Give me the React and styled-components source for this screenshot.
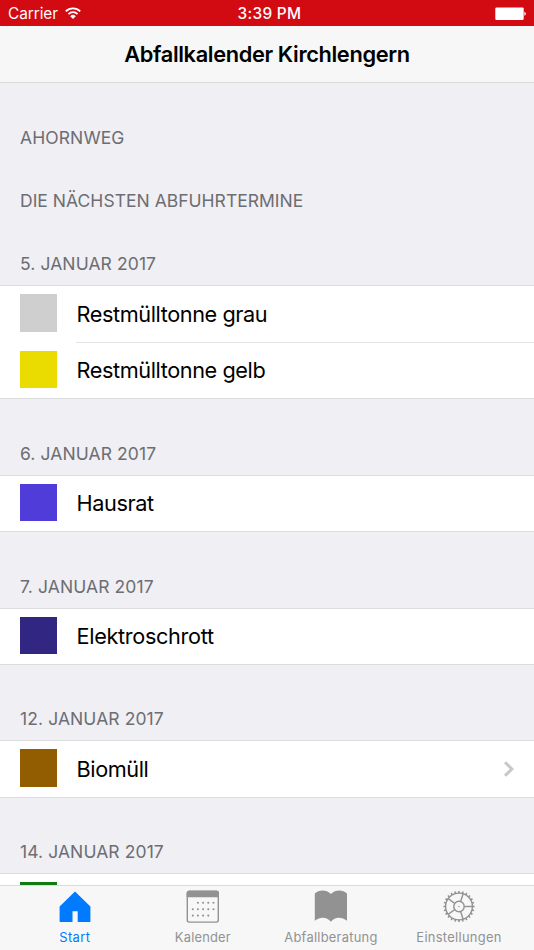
import React from 'react';
import styled, { createGlobalStyle } from 'styled-components';

const GlobalStyle = createGlobalStyle`
  * { box-sizing: border-box; }
  html, body { margin: 0; padding: 0; }
  body {
    font-family: Inter, "Liberation Sans", sans-serif;
    background: #efeff4;
    overflow: hidden;
  }
`;

const Screen = styled.div`
  display: flex;
  flex-direction: column;
  width: 534px;
  height: 950px;
  background: #efeff4;
  overflow: hidden;
`;

const StatusBar = styled.header`
  flex: none;
  display: grid;
  grid-template-columns: 1fr auto 1fr;
  align-items: center;
  height: 26px;
  padding: 1px 8px 0 8px;
  background: #d20a11;
  color: #fff;
  line-height: 20px;
`;

const Carrier = styled.div`
  display: flex;
  align-items: center;
  gap: 7px;
  font-size: 15.4px;
  letter-spacing: -0.08px;
`;

const Clock = styled.div`
  padding-left: 5px;
  font-size: 15.4px;
  font-weight: 500;
  letter-spacing: 0.3px;
`;

const BatteryIcon = styled.svg`
  justify-self: end;
  display: block;
`;

const NavBar = styled.div`
  flex: none;
  display: flex;
  align-items: center;
  justify-content: center;
  height: 57px;
  background: #f7f7f7;
  border-bottom: 1px solid #dadadc;
`;

const Title = styled.h1`
  margin: 0;
  font-size: 21.8px;
  font-weight: 600;
  line-height: 28px;
  letter-spacing: -0.36px;
  color: #000;
`;

const Content = styled.main`
  flex: 1;
  min-height: 0;
  overflow: hidden;
`;

const SectionHeader = styled.h2`
  display: flex;
  align-items: flex-end;
  height: ${(p) => p.$height}px;
  margin: 0;
  padding: 0 20px 11px;
  font-size: 17.5px;
  font-weight: 400;
  line-height: 20px;
  letter-spacing: ${(p) => p.$tracking ?? 0.1}px;
  color: #6d6d72;
`;

const Group = styled.ul`
  margin: 0;
  padding: 0;
  list-style: none;
  background: #fff;
  border-top: 1px solid #dcdce0;
  border-bottom: 1px solid #dcdce0;
`;

const Row = styled.li`
  display: flex;
  align-items: stretch;
  height: ${(p) => p.$height}px;
  padding-left: 20px;
`;

const Swatch = styled.span`
  flex: none;
  width: 37px;
  height: ${(p) => p.$size ?? 37}px;
  margin: 8px 19px 0 0;
  background: ${(p) => p.$color};
`;

const RowBody = styled.div`
  flex: 1;
  display: flex;
  align-items: center;
  justify-content: space-between;
  padding: 0 19px 1px 0.6px;
  border-bottom: ${(p) => (p.$divided ? '1px solid #e2e2e4' : 'none')};
`;

const RowLabel = styled.span`
  font-size: 21.7px;
  line-height: 28px;
  letter-spacing: ${(p) => p.$tracking ?? -0.42}px;
  color: #000;
`;

const TabBar = styled.nav`
  flex: none;
  display: flex;
  height: 65px;
  padding: 0 11.2px 0 10.5px;
  background: #f7f7f7;
  border-top: 1px solid #dadadc;
`;

const Tab = styled.a`
  flex: 1 1 0;
  display: flex;
  flex-direction: column;
  align-items: center;
  padding-top: 4px;
  color: ${(p) => (p.$active ? '#007aff' : '#929292')};
`;

const TabLabel = styled.span`
  margin-top: 6px;
  padding-left: 0.5px;
  font-size: 12.9px;
  line-height: 16px;
  letter-spacing: ${(p) => p.$tracking}px;
  white-space: nowrap;
`;

const TabIcon = styled.svg`
  display: block;
  width: 34px;
  height: 34px;
`;

const WifiIcon = () => (
  <svg width="16" height="13" viewBox="0 0 16 13" fill="none" stroke="#fff">
    <path d="M.8 4.4a10.2 10.2 0 0 1 14.4 0" strokeWidth="1.9" />
    <path d="M3.4 7.1a6.5 6.5 0 0 1 9.2 0" strokeWidth="1.8" />
    <path d="M5.2 9.2a4 4 0 0 1 5.6 0L8 12z" fill="#fff" stroke="none" />
  </svg>
);

const Chevron = () => (
  <svg width="12" height="18" viewBox="0 0 12 18" fill="none">
    <path d="M2 2.2 8.9 9 2 15.8" stroke="#c7c7cc" strokeWidth="2.9" />
  </svg>
);

const HomeIcon = () => (
  <TabIcon viewBox="0 0 34 34" fill="currentColor">
    <path d="M17 1.4 32.4 16.4V31.2a.9.9 0 0 1-.9.9H19.7V21.2h-5.2v10.900H2.500a.9.9 0 0 1-.9-.9V16.400z" />
  </TabIcon>
);

const DOTS = [
  [12.4, 12.7], [17.6, 12.7], [22.8, 12.7], [28, 12.7],
  [7.3, 19.2], [12.4, 19.2], [17.6, 19.2], [22.8, 19.2], [28, 19.2],
  [7.3, 25.6], [12.4, 25.6], [17.6, 25.6], [22.8, 25.6],
];

const CalendarIcon = () => (
  <TabIcon viewBox="0.500 0 34 34" fill="currentColor">
    <rect x="1.8" y="1.3" width="31" height="30.8" rx="2" fill="none" stroke="currentColor" strokeWidth="1.4" />
    <path d="M1.1 7.2V3a2.3 2.3 0 0 1 2.3-2.3H31.200A2.3 2.3 0 0 1 33.500 3v4.200z" />
    {DOTS.map(([x, y]) => (
      <circle key={`${x}-${y}`} cx={x} cy={y} r="1.05" />
    ))}
  </TabIcon>
);

const BookIcon = () => (
  <TabIcon viewBox="0 0 34 34" fill="currentColor">
    <path d="M.8 3.600C5-.6 12.500-.6 16.900 4 21.300-.6 28.800-.6 33 3.600V30.700C27.500 26.600 21 26.800 16.900 31.700 12.800 26.800 6.300 26.600.8 30.700Z" />
  </TabIcon>
);

const TEETH = Array.from({ length: 24 }, (_, i) => i * 15);
const SPOKES = [0, 72, 144, 216, 288];

const GearIcon = () => (
  <TabIcon viewBox="0 0 34 34" fill="none" stroke="currentColor" strokeWidth="1.4">
    <circle cx="17" cy="16.500" r="13.400" />
    <circle cx="17" cy="16.500" r="5.200" />
    {TEETH.map((a) => (
      <path key={a} d="M30.500 16.500h2.100" strokeWidth="1.600" transform={`rotate(${a} 17 16.500)`} />
    ))}
    {SPOKES.map((a) => (
      <path key={a} d="M22.200 16.500h8.200" transform={`rotate(${a} 17 16.500)`} />
    ))}
    <circle cx="17" cy="16.500" r=".7" fill="currentColor" stroke="none" />
  </TabIcon>
);

const SECTIONS = [
  { title: 'AHORNWEG', height: 76, rows: [] },
  { title: 'DIE NÄCHSTEN ABFUHRTERMINE', height: 63, tracking: 0.02, rows: [] },
  {
    title: '5. JANUAR 2017',
    height: 63,
    rows: [
      { label: 'Restmülltonne grau', color: '#cfcfcf', height: 57, size: 38 },
      { label: 'Restmülltonne gelb', color: '#eadb00', height: 55 },
    ],
  },
  { title: '6. JANUAR 2017', height: 76, rows: [{ label: 'Hausrat', color: '#4f3cd9', height: 55 }] },
  {
    title: '7. JANUAR 2017',
    height: 76,
    rows: [{ label: 'Elektroschrott', color: '#312782', height: 55, tracking: -0.34 }],
  },
  {
    title: '12. JANUAR 2017',
    height: 75,
    rows: [{ label: 'Biomüll', color: '#925c00', height: 56, size: 38, link: true }],
  },
  { title: '14. JANUAR 2017', height: 75, rows: [{ label: '', color: '#117a11', height: 56 }] },
];

const TABS = [
  { label: 'Start', Icon: HomeIcon, tracking: 0.4, active: true },
  { label: 'Kalender', Icon: CalendarIcon, tracking: 0.2 },
  { label: 'Abfallberatung', Icon: BookIcon, tracking: 0.26 },
  { label: 'Einstellungen', Icon: GearIcon, tracking: 0.3 },
];

export default function App() {
  return (
    <>
      <GlobalStyle />
      <Screen>
        <StatusBar>
          <Carrier>
            Carrier
            <WifiIcon />
          </Carrier>
          <Clock>3:39 PM</Clock>
          <BatteryIcon width="31" height="14" viewBox="0 0 31 14" fill="#fff">
            <rect x=".3" y=".4" width="28.400" height="12.600" rx="1.200" />
            <path d="M29.400 4.700v4a2.100 2.100 0 0 0 0-4z" />
          </BatteryIcon>
        </StatusBar>
        <NavBar>
          <Title>Abfallkalender Kirchlengern</Title>
        </NavBar>
        <Content>
          {SECTIONS.map(({ title, height, tracking, rows }) => (
            <section key={title}>
              <SectionHeader $height={height} $tracking={tracking}>{title}</SectionHeader>
              {rows.length > 0 && (
                <Group>
                  {rows.map((row, i) => (
                    <Row key={row.color} $height={row.height}>
                      <Swatch $color={row.color} $size={row.size} />
                      <RowBody $divided={i < rows.length - 1}>
                        <RowLabel $tracking={row.tracking}>{row.label}</RowLabel>
                        {row.link && <Chevron />}
                      </RowBody>
                    </Row>
                  ))}
                </Group>
              )}
            </section>
          ))}
        </Content>
        <TabBar>
          {TABS.map(({ label, Icon, tracking, active }) => (
            <Tab key={label} $active={active}>
              <Icon />
              <TabLabel $tracking={tracking}>{label}</TabLabel>
            </Tab>
          ))}
        </TabBar>
      </Screen>
    </>
  );
}
